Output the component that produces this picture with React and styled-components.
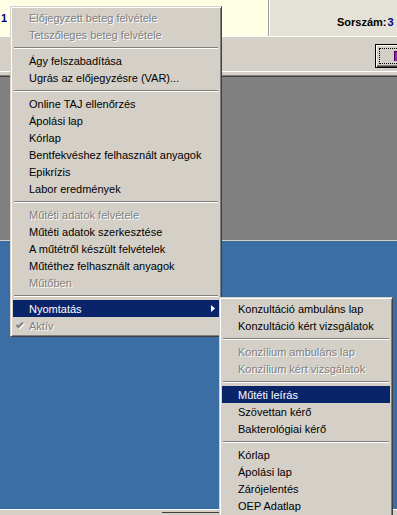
import React from "react";
import styled, { createGlobalStyle } from "styled-components";

const Global = createGlobalStyle`
  html, body { margin: 0; padding: 0; background: #3a6ea5; }
  body { width: 397px; height: 515px; overflow: hidden; }
`;

const FONT = `"Liberation Sans", Arial, sans-serif`;

const Screen = styled.div`
  position: relative;
  width: 397px;
  height: 515px;
  overflow: hidden;
  display: flex;
  flex-direction: column;
  font-family: ${FONT};
`;

const TopBar = styled.div`
  height: 36px;
  display: flex;
  flex-shrink: 0;
`;

const CreamPanel = styled.div`
  width: 268px;
  background: #ffffe6;
  display: flex;
  align-items: center;
  padding-left: 1px;
  box-sizing: border-box;
`;

const PanelDivider = styled.div`
  width: 2px;
  border-left: 1px solid #a0a0a0;
  background: #ffffff;
  box-sizing: border-box;
`;

const InfoPanel = styled.div`
  flex: 1;
  background: #e4e1d6;
  display: flex;
  align-items: center;
  padding: 8px 0 0 67px;
  white-space: nowrap;
  overflow: hidden;
`;

const Label = styled.span`
  font-weight: bold;
  font-size: 11px;
  color: ${(p) => (p.$blue ? "#000080" : "#000")};
  margin-left: ${(p) => (p.$gap ? "1px" : "0")};
`;

const HLine = styled.div`
  height: 1px;
  flex-shrink: 0;
  background: ${(p) => p.$color};
`;

const Toolbar = styled.div`
  height: 34px;
  flex-shrink: 0;
  background: #d4d0c8;
  display: flex;
  justify-content: flex-end;
  align-items: flex-start;
  padding-top: 7px;
  box-sizing: border-box;
  overflow: hidden;
`;

const ToolButton = styled.div`
  width: 40px;
  height: 24px;
  margin-right: -18px;
  flex-shrink: 0;
  box-sizing: border-box;
  border: 1px solid #000;
  background: #d4d0c8;
  box-shadow: inset 1px 1px #fff, inset -1px -1px #404040, inset -2px -2px #808080;
  display: flex;
  align-items: center;
  padding: 3px;
`;

const FocusRect = styled.div`
  flex: 1;
  align-self: stretch;
  border: 1px dotted #000;
  display: flex;
  align-items: center;
  padding-left: 14px;
`;

const Gap = styled.div`
  height: ${(p) => p.$h}px;
  flex-shrink: 0;
  background: ${(p) => p.$color};
`;

const GrayArea = styled.div`
  height: 163px;
  flex-shrink: 0;
  background: #808080;
`;

const Desktop = styled.div`
  flex: 1;
  background: #3a6ea5;
`;

const StatusStrip = styled.div`
  height: 5px;
  flex-shrink: 0;
  border-top: 1px solid #ffffff;
  background: #d4d0c8;
  display: flex;
`;

const StatusPanel = styled.div`
  margin-left: 162px;
  margin-top: 2px;
  width: 58px;
  border-top: 1px solid #404040;
  background: #d4d0c8;
`;

/* Menus */

const Menu = styled.div`
  position: absolute;
  left: ${(p) => p.$left}px;
  top: ${(p) => p.$top}px;
  width: ${(p) => p.$width}px;
  box-sizing: border-box;
  background: #d4d0c8;
  border: 1px solid;
  border-color: #d4d0c8 #404040 #404040 #d4d0c8;
  box-shadow: inset 1px 1px #ffffff, inset -1px -1px #808080;
  padding: 2px;
  font-family: ${FONT};
  font-size: 11px;
`;

const Item = styled.div`
  height: 17px;
  display: flex;
  align-items: center;
  white-space: nowrap;
  background: ${(p) => (p.$active ? "#0a246a" : "transparent")};
  color: ${(p) => (p.$active ? "#ffffff" : p.$disabled ? "#808080" : "#000000")};
  text-shadow: ${(p) => (p.$disabled && !p.$active ? "1px 1px 0 #ffffff" : "none")};
`;

const Gutter = styled.div`
  width: 16px;
  flex-shrink: 0;
  display: flex;
  align-items: center;
  justify-content: center;
  padding-right: 1px;
  box-sizing: border-box;
`;

const ItemText = styled.span`
  flex: 1;
`;

const ArrowSlot = styled.div`
  width: 12px;
  display: flex;
  align-items: center;
  justify-content: center;
`;

const Separator = styled.div`
  height: 9px;
  display: flex;
  align-items: center;
  padding: 0 1px;
`;

const SepLine = styled.div`
  flex: 1;
  border-top: 1px solid #808080;
  border-bottom: 1px solid #ffffff;
`;

const Check = ({ disabled }) => (
  <svg width="9" height="9" viewBox="0 0 9 9">
    {disabled && (
      <path d="M1.5 5 L3.5 7 L8 2.5" fill="none" stroke="#ffffff" strokeWidth="2" />
    )}
    <path d="M0.5 4 L2.5 6 L7 1.5" fill="none" stroke={disabled ? "#808080" : "#000"} strokeWidth="2" />
  </svg>
);

const Arrow = ({ color }) => (
  <svg width="4" height="7" viewBox="0 0 4 7">
    <path d="M0 0 L4 3.5 L0 7 Z" fill={color} />
  </svg>
);

const SEP = { sep: true };

const mainItems = [
  { label: "Előjegyzett beteg felvétele", disabled: true },
  { label: "Tetszőleges beteg felvétele", disabled: true },
  SEP,
  { label: "Ágy felszabadítása" },
  { label: "Ugrás az előjegyzésre (VAR)..." },
  SEP,
  { label: "Online TAJ ellenőrzés" },
  { label: "Ápolási lap" },
  { label: "Kórlap" },
  { label: "Bentfekvéshez felhasznált anyagok" },
  { label: "Epikrízis" },
  { label: "Labor eredmények" },
  SEP,
  { label: "Műtéti adatok felvétele", disabled: true },
  { label: "Műtéti adatok szerkesztése" },
  { label: "A műtétről készült felvételek" },
  { label: "Műtéthez felhasznált anyagok" },
  { label: "Műtőben", disabled: true },
  SEP,
  { label: "Nyomtatás", active: true, submenu: true },
  { label: "Aktív", disabled: true, checked: true },
];

const subItems = [
  { label: "Konzultáció ambuláns lap" },
  { label: "Konzultáció kért vizsgálatok" },
  SEP,
  { label: "Konzílium ambuláns lap", disabled: true },
  { label: "Konzílium kért vizsgálatok", disabled: true },
  SEP,
  { label: "Műtéti leírás", active: true },
  { label: "Szövettan kérő" },
  { label: "Bakterológiai kérő" },
  SEP,
  { label: "Kórlap" },
  { label: "Ápolási lap" },
  { label: "Zárójelentés" },
  { label: "OEP Adatlap" },
];

const PopupMenu = ({ items, left, top, width }) => (
  <Menu $left={left} $top={top} $width={width}>
    {items.map((it, i) =>
      it.sep ? (
        <Separator key={i}>
          <SepLine />
        </Separator>
      ) : (
        <Item key={i} $active={it.active} $disabled={it.disabled}>
          <Gutter>{it.checked && <Check disabled={it.disabled} />}</Gutter>
          <ItemText>{it.label}</ItemText>
          <ArrowSlot>{it.submenu && <Arrow color={it.active ? "#fff" : "#000"} />}</ArrowSlot>
        </Item>
      )
    )}
  </Menu>
);

export default function App() {
  return (
    <>
      <Global />
      <Screen>
        <TopBar>
          <CreamPanel>
            <Label $blue>1</Label>
          </CreamPanel>
          <PanelDivider />
          <InfoPanel>
            <Label>Sorszám:</Label>
            <Label $blue $gap>3</Label>
          </InfoPanel>
        </TopBar>
        <HLine $color="#ffffff" />
        <Toolbar>
          <ToolButton>
            <FocusRect>
              <svg width="10" height="10" viewBox="0 0 10 10">
                <rect x="0" y="0" width="10" height="10" fill="#a020c0" />
                <rect x="0" y="0" width="10" height="1" fill="#400060" />
                <rect x="0" y="0" width="1" height="10" fill="#400060" />
              </svg>
            </FocusRect>
          </ToolButton>
        </Toolbar>
        <HLine $color="#ffffff" />
        <Gap $h={3} $color="#d4d0c8" />
        <HLine $color="#808080" />
        <HLine $color="#404040" />
        <GrayArea />
        <HLine $color="#d4d0c8" />
        <Desktop />
        <StatusStrip>
          <StatusPanel />
        </StatusStrip>

        <PopupMenu items={mainItems} left={10} top={6} width={212} />
        <PopupMenu items={subItems} left={219} top={297} width={174} />
      </Screen>
    </>
  );
}
